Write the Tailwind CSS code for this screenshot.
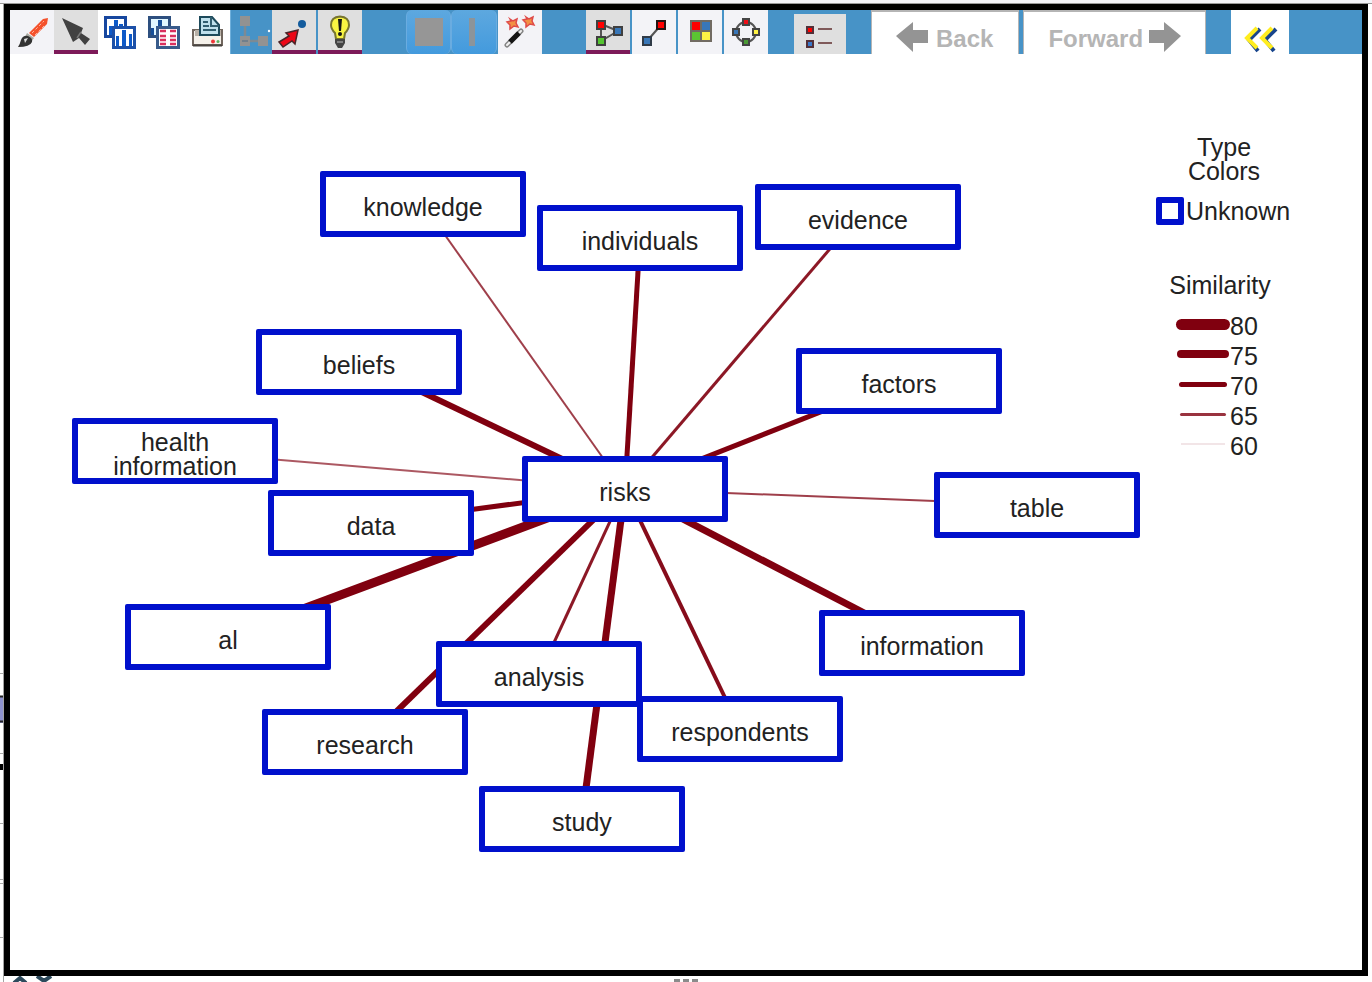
<!DOCTYPE html>
<html lang="en">
<head>
<meta charset="utf-8">
<title>Similarity link chart</title>
<script src="https://cdn.jsdelivr.net/npm/@tailwindcss/browser@4"></script>
</head>
<body class="min-h-screen flex flex-col bg-white text-[#222222] font-['Liberation_Sans',Arial,sans-serif] text-[25px] leading-6">
<div class="h-1 bg-[#f3f3f8] border-b border-[#999999] shrink-0"></div>
<div class="flex grow">
  <!-- sliver of the window behind -->
  <svg class="w-1 shrink-0" aria-hidden="true"><path d="M3.5 0V980" stroke="#a3a3a3"/><path d="M0 669.500h3M0 749.500h3M0 819.500h3M0 875.500h3M0 879.500h3M0 933.500h3" stroke="#aaa"/><path d="M0 693h3v26H0z" fill="#8f93cf"/><path d="M0 692.500h3M0 717.500h3" stroke="#222" stroke-width="2"/><path d="M0 760h3v6H0z"/></svg>
  <main class="grow flex flex-col border-6 border-black mr-1 min-w-0">
    <div role="toolbar" aria-label="Chart tools" class="flex h-11 bg-[#4793c7] shrink-0">
      <button aria-label="Brush" class="w-11 bg-[#f3f3f7]"><svg class="size-11" viewBox="0 0 44 44">
        <path d="M19 23L33 9l5-1-1 6-13 13z" fill="#f4512c"/><path d="M22 23L34 11M25 25l9-9" stroke="#ffb49c" stroke-width="1" stroke-dasharray="3 2"/>
        <path d="M17 23l7 5-3 4-6-5z" fill="#a8a8a0"/><path d="M8 37q2-3 3-7 2-5 7-4 5 2 4 6-2 5-14 5z" fill="#333"/><path d="M14 29l4-1-3 5z" fill="#ddd"/></svg></button>
      <button aria-label="Select" aria-pressed="true" class="w-11 bg-[#dfdfdf] border-b-4 border-[#7d1a59]"><svg class="w-11 h-10" viewBox="0 0 44 40">
        <path d="M8 8L29 18l-2 5 9 6-5 6-6-7-6 4z" fill="#414141"/><path d="M27 22l-4 6" stroke="#777" stroke-width="1.500"/></svg></button>
      <button aria-label="Bar charts" class="w-11 bg-white"><svg class="size-11" viewBox="0 0 44 44">
        <path d="M7.500 7.500h20v19h-20z" fill="#fff" stroke="#17479f" stroke-width="3"/><path d="M11 16h4v9h-4zM16 10h4v15h-4zM21 14h4v11h-4z" fill="#0d59c8"/>
        <path d="M15.500 17.500h21v20h-21z" fill="#fff" stroke="#1c50a8" stroke-width="3"/><path d="M18 26h3v10h-3zM24 20h4v16h-4zM31 24h3v12h-3z" fill="#0d59c8"/></svg></button>
      <button aria-label="Chart and table" class="w-11 bg-white"><svg class="size-11" viewBox="0 0 44 44">
        <path d="M7.500 7.500h20v19h-20z" fill="#e1f7ff" stroke="#2d4f7f" stroke-width="3"/><path d="M9 18h3v7H9zM16 10h4v15h-4z" fill="#174f99"/>
        <path d="M15.500 17.500h21v20h-21z" fill="#fff" stroke="#385b8b" stroke-width="3"/><path d="M18 21h6M28 21h6M18 26h6M28 26h6M18 30h6M28 30h6M18 34h6M28 34h6" stroke="#d9305f" stroke-width="2.500"/></svg></button>
      <button aria-label="Print" class="w-11 bg-white"><svg class="size-11" viewBox="0 0 44 44">
        <path d="M7 20h29v15H7z" fill="#f5f1ea" stroke="#70665e" stroke-width="2"/><path d="M9 20h26v6H9z" fill="#b8b0a6"/>
        <path d="M14 7h12l7 8v10H14z" fill="#bfe0ec" stroke="#1d4a5b" stroke-width="2"/><path d="M25 7v9h8M17 12h5M17 16h6M17 20h13" stroke="#315e70" stroke-width="2" fill="none"/>
        <path d="M7 35.500h29" stroke="#494440" stroke-width="2"/><circle cx="27" cy="31.500" r="2" fill="#ee3838"/><circle cx="32" cy="31.500" r="1.500" fill="#5ab360"/></svg></button>
      <button aria-label="Expand tree" class="w-[42px] border-l border-[#6fb0dc]"><svg class="w-[41px] h-11" viewBox="0 0 41 44">
        <path d="M14 13v18h18" stroke="#7c8a94" stroke-width="2.500" fill="none"/><path d="M9 6h10v10H9zM9 26h10v10H9zM27 26h10v10H27z" fill="#929292"/><path d="M11 31h6" stroke="#667988" stroke-width="1.500"/><circle cx="38" cy="21" r="1.200" fill="#fff"/></svg></button>
      <button aria-label="Point to node" aria-pressed="true" class="w-11 bg-[#dfdfdf] border-b-4 border-[#7d1a59]"><svg class="w-11 h-10" viewBox="0 0 44 40">
        <circle cx="30" cy="14" r="4" fill="#145c9d"/><path d="M26 20l-12 3 3 3-10 6 4 5 9-6 3 3z" fill="#ec0716" stroke="#4b2428" stroke-width="1.500"/></svg></button>
      <button aria-label="Hints" aria-pressed="true" class="w-11 ml-0.5 bg-[#dfdfdf] border-b-4 border-[#7d1a59]"><svg class="w-11 h-10" viewBox="0 0 44 40">
        <path d="M18 29l-1-6q-4-4-4-8 0-8 9-8.500 9 .5 9 8.500 0 4-4 8l-1 6z" fill="#f8f442" stroke="#77752f" stroke-width="2"/><path d="M20 9h4l-1 12h-2z" fill="#161616"/><circle cx="22" cy="24" r="2" fill="#161616"/><path d="M17 29h10v4l-3 5h-4l-3-5z" fill="#444"/><path d="M19 32h6" stroke="#bbb"/></svg></button>
      <button aria-label="Stop" disabled class="w-[45px] ml-11 rounded-md bg-linear-to-b from-[#5da8df] to-[#439add] border-x border-[#6aace0] flex items-center justify-center"><span class="size-7 bg-[#969696]"></span></button>
      <button aria-label="Pause" disabled class="w-[46px] rounded-md bg-linear-to-b from-[#5da8df] to-[#439add] border-x border-[#6aace0] flex items-center justify-center"><span class="w-1.5 h-7 mr-1 bg-[#8c949a]"></span></button>
      <button aria-label="Magic wand" class="w-11 ml-px bg-[#f3f3f7]"><svg class="size-11" viewBox="0 0 44 44">
        <path id="star" d="M12 9l3 2 4-2-1 4 2 4-4-1-4 3v-4l-3-3 4-1z" fill="#f29044" stroke="#df4a48" stroke-width="1.500"/><use href="#star" x="16" y="-2"/>
        <path d="M9 35L23 21" stroke="#858585" stroke-width="5" stroke-linecap="round"/><path d="M9 35L23 21" stroke="#f1f1f1" stroke-width="2" stroke-linecap="round"/><path d="M12 32l9-9" stroke="#151515" stroke-width="5"/></svg></button>
      <button aria-label="Network layout" aria-pressed="true" class="w-11 ml-11 bg-[#dfdfdf] border-b-4 border-[#7d1a59]"><svg class="w-11 h-10" viewBox="0 0 44 40">
        <path d="M15 14v17L32 21z" fill="none" stroke="#555" stroke-width="2"/><g stroke="#404040" stroke-width="2"><path d="M11 11h8v8h-8z" fill="#f00"/><path d="M28 17h8v8h-8z" fill="#3977b8"/><path d="M11 27h8v8h-8z" fill="#55c531"/></g></svg></button>
      <button aria-label="Link layout" class="w-11 ml-0.5 bg-[#f3f3f7]"><svg class="size-11" viewBox="0 0 44 44">
        <path d="M15 31l14-16" stroke="#555" stroke-width="2"/><path d="M25 11h8v8h-8z" fill="#f00" stroke="#251313" stroke-width="2"/><path d="M11 27h8v8h-8z" fill="#3977b8" stroke="#303b48" stroke-width="2"/></svg></button>
      <button aria-label="Grid layout" class="w-11 ml-0.5 bg-[#f3f3f7]"><svg class="size-11" viewBox="0 0 44 44">
        <path d="M12 10h22v22H12z" fill="#716b62"/><path d="M14 12h8v8h-8z" fill="#f00"/><path d="M24 12h8v8h-8z" fill="#3977b8"/><path d="M14 22h8v8h-8z" fill="#5bc632"/><path d="M24 22h8v8h-8z" fill="#fff244"/></svg></button>
      <button aria-label="Circle layout" class="w-11 ml-0.5 bg-[#f3f3f7]"><svg class="size-11" viewBox="0 0 44 44">
        <circle cx="22" cy="22" r="10" fill="none" stroke="#555" stroke-width="2"/><g stroke="#444" stroke-width="2"><path d="M19 9h6v6h-6z" fill="#ee0e17"/><path d="M9 19h6v6H9z" fill="#3977b8"/><path d="M29 19h6v6h-6z" fill="#fff244"/><path d="M19 29h6v6h-6z" fill="#4a9a35"/></g></svg></button>
      <button aria-label="Legend" aria-pressed="true" class="w-[52px] h-10 mt-1 ml-[26px] bg-[#dfdfdf]"><svg class="w-[52px] h-10" viewBox="0 0 52 40">
        <path d="M24 15h14M24 29h14" stroke="#805a5a" stroke-width="2"/><g stroke="#532f38" stroke-width="2"><path d="M13 13h6v6h-6z" fill="#f00"/><path d="M13 27h6v6h-6z" fill="#3977c8"/></g></svg></button>
      <button disabled class="ml-[25px] pl-6 pr-[25px] pt-3 border-t-2 border-x border-[#b5b5b5] bg-white text-2xl leading-6 font-bold text-[#b5b5b5] flex items-center gap-2 shrink-0"><svg class="w-8 h-8 mb-1" viewBox="0 0 32 32"><path d="M0 15L17 1v8h15v13H17v9z" fill="#949494"/></svg>Back</button>
      <button disabled class="ml-1 pl-6 pr-6 pt-3 border-t-2 border-x border-[#b5b5b5] bg-white text-2xl leading-6 font-bold text-[#b5b5b5] flex items-center gap-1.5 shrink-0">Forward<svg class="w-8 h-8 mb-1" viewBox="0 0 32 32"><path d="M32 15L15 1v8H0v13h15v9z" fill="#949494"/></svg></button>
      <button aria-label="Collapse" class="w-[58px] ml-[25px] bg-white"><svg class="w-[58px] h-11" viewBox="0 0 58 44" fill="none" stroke-width="4">
        <path d="M29 19L18 30l9 11M45 19L34 30l9 11" stroke="#18458c"/><path d="M26 18L16 28l10 10M41 18L31 28l10 10" stroke="#ffed1f"/></svg></button>
    </div>

    <section aria-label="Link chart" class="relative grow flex items-start justify-end">
      <svg class="absolute inset-0 size-full" stroke="#80000f" aria-hidden="true">
        <path d="M615 435L413 150" stroke-width="2" opacity=".75"/>
        <path d="M615 435L630 184" stroke-width="5"/>
        <path d="M615 435L848 162" stroke-width="3" opacity=".9"/>
        <path d="M615 435L349 308" stroke-width="6"/>
        <path d="M615 435L889 327" stroke-width="5"/>
        <path d="M615 435L165 397" stroke-width="2" opacity=".65"/>
        <path d="M615 435L361 469" stroke-width="5"/>
        <path d="M615 435L218 583" stroke-width="9"/>
        <path d="M615 435L355 688" stroke-width="6"/>
        <path d="M615 435L529 621" stroke-width="3" opacity=".9"/>
        <path d="M615 435L572 765" stroke-width="7"/>
        <path d="M615 435L730 675" stroke-width="4" opacity=".95"/>
        <path d="M615 435L912 589" stroke-width="7"/>
        <path d="M615 435L1027 451" stroke-width="2" opacity=".75"/>
      </svg>
      <div class="absolute left-[310px] top-[117px] w-[206px] h-[66px] pt-1.5 flex items-center justify-center text-center rounded-xs border-6 border-[#0010cc] bg-white">knowledge</div>
      <div class="absolute left-[527px] top-[151px] w-[206px] h-[66px] pt-1.5 flex items-center justify-center text-center rounded-xs border-6 border-[#0010cc] bg-white">individuals</div>
      <div class="absolute left-[745px] top-[130px] w-[206px] h-[66px] pt-1.5 flex items-center justify-center text-center rounded-xs border-6 border-[#0010cc] bg-white">evidence</div>
      <div class="absolute left-[246px] top-[275px] w-[206px] h-[66px] pt-1.5 flex items-center justify-center text-center rounded-xs border-6 border-[#0010cc] bg-white">beliefs</div>
      <div class="absolute left-[786px] top-[294px] w-[206px] h-[66px] pt-1.5 flex items-center justify-center text-center rounded-xs border-6 border-[#0010cc] bg-white">factors</div>
      <div class="absolute left-[62px] top-[364px] w-[206px] h-[66px] pt-1.5 flex items-center justify-center text-center rounded-xs border-6 border-[#0010cc] bg-white">health<br>information</div>
      <div class="absolute left-[258px] top-[436px] w-[206px] h-[66px] pt-1.5 flex items-center justify-center text-center rounded-xs border-6 border-[#0010cc] bg-white">data</div>
      <div class="absolute left-[512px] top-[402px] w-[206px] h-[66px] pt-1.5 flex items-center justify-center text-center rounded-xs border-6 border-[#0010cc] bg-white">risks</div>
      <div class="absolute left-[924px] top-[418px] w-[206px] h-[66px] pt-1.5 flex items-center justify-center text-center rounded-xs border-6 border-[#0010cc] bg-white">table</div>
      <div class="absolute left-[115px] top-[550px] w-[206px] h-[66px] pt-1.5 flex items-center justify-center text-center rounded-xs border-6 border-[#0010cc] bg-white">al</div>
      <div class="absolute left-[809px] top-[556px] w-[206px] h-[66px] pt-1.5 flex items-center justify-center text-center rounded-xs border-6 border-[#0010cc] bg-white">information</div>
      <div class="absolute left-[627px] top-[642px] w-[206px] h-[66px] pt-1.5 flex items-center justify-center text-center rounded-xs border-6 border-[#0010cc] bg-white">respondents</div>
      <div class="absolute left-[426px] top-[587px] w-[206px] h-[66px] pt-1.5 flex items-center justify-center text-center rounded-xs border-6 border-[#0010cc] bg-white">analysis</div>
      <div class="absolute left-[252px] top-[655px] w-[206px] h-[66px] pt-1.5 flex items-center justify-center text-center rounded-xs border-6 border-[#0010cc] bg-white">research</div>
      <div class="absolute left-[469px] top-[732px] w-[206px] h-[66px] pt-1.5 flex items-center justify-center text-center rounded-xs border-6 border-[#0010cc] bg-white">study</div>

      <aside aria-label="Legend" class="relative w-[136px] mr-[70px] mt-[81px]">
        <h2 class="text-center">Type<br>Colors</h2>
        <div class="flex items-center mt-3.5 gap-0.5"><span class="size-7 border-6 border-[#0010cc] shrink-0 rounded-xs"></span><span>Unknown</span></div>
        <h2 class="text-center mt-12 pr-2">Similarity</h2>
        <ul class="mt-3 pl-5">
          <li class="h-[30px] flex items-center"><span class="w-[54px] flex justify-center"><span class="w-[54px] h-[11px] rounded-full bg-[#80000f]"></span></span><span class="pt-1">80</span></li>
          <li class="h-[30px] flex items-center"><span class="w-[54px] flex justify-center"><span class="w-[52px] h-2 rounded-full bg-[#80000f]"></span></span><span class="pt-1">75</span></li>
          <li class="h-[30px] flex items-center"><span class="w-[54px] flex justify-center"><span class="w-12 h-[5px] rounded-full bg-[#80000f]"></span></span><span class="pt-1">70</span></li>
          <li class="h-[30px] flex items-center"><span class="w-[54px] flex justify-center"><span class="w-[46px] h-[3px] rounded-full bg-[#80000f]/80"></span></span><span class="pt-1">65</span></li>
          <li class="h-[30px] flex items-center"><span class="w-[54px] flex justify-center"><span class="w-11 h-0.5 bg-[#80000f]/10"></span></span><span class="pt-1">60</span></li>
        </ul>
      </aside>
    </section>
  </main>
</div>
<!-- splitter below the chart -->
<footer class="h-1.5 shrink-0 grid grid-cols-[1fr_auto_1fr] bg-white">
  <svg class="w-14 h-1.5" viewBox="0 0 56 6" fill="none" stroke="#2d4a5c" stroke-width="4" aria-hidden="true"><path d="M3.500 0v6" stroke="#a3a3a3" stroke-width="1"/><path d="M14 7l6-5 6 5M37 0l7 5 7-5"/></svg>
  <span class="flex gap-[3px] items-end"><i class="w-1.5 h-[3px] bg-[#8b8b8b]"></i><i class="w-1.5 h-[3px] bg-[#8b8b8b]"></i><i class="w-1.5 h-[3px] bg-[#8b8b8b]"></i></span>
</footer>
</body>
</html>
